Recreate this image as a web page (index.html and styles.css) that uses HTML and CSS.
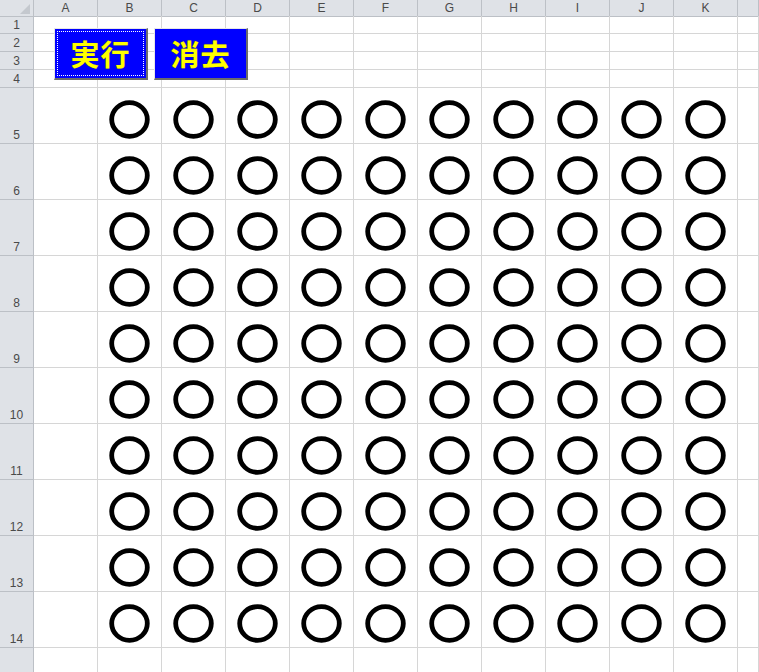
FILE: index.html
```html
<!DOCTYPE html>
<html lang="ja">
<head>
<meta charset="utf-8">
<title>Sheet</title>
<link rel="stylesheet" href="styles.css">
</head>
<body>
<svg class="defs" width="0" height="0" aria-hidden="true">
  <symbol id="o" viewBox="0 0 41 39">
    <ellipse cx="20.5" cy="19.5" rx="17.8" ry="16.8" fill="none" stroke="#000" stroke-width="4.8"/>
  </symbol>
</svg>
<div class="sheet">
  <div class="row head">
    <div class="corner"><span class="tri"></span></div>
    <div class="ch">A</div><div class="ch">B</div><div class="ch">C</div><div class="ch">D</div><div class="ch">E</div><div class="ch">F</div><div class="ch">G</div><div class="ch">H</div><div class="ch">I</div><div class="ch">J</div><div class="ch">K</div><div class="ch"></div>
  </div>
  <div class="row"><div class="rh">1</div><div class="c"></div><div class="c"></div><div class="c"></div><div class="c"></div><div class="c"></div><div class="c"></div><div class="c"></div><div class="c"></div><div class="c"></div><div class="c"></div><div class="c"></div><div class="c"></div></div>
  <div class="row"><div class="rh">2</div><div class="c"></div><div class="c"></div><div class="c"></div><div class="c"></div><div class="c"></div><div class="c"></div><div class="c"></div><div class="c"></div><div class="c"></div><div class="c"></div><div class="c"></div><div class="c"></div></div>
  <div class="row"><div class="rh">3</div><div class="c"></div><div class="c"></div><div class="c"></div><div class="c"></div><div class="c"></div><div class="c"></div><div class="c"></div><div class="c"></div><div class="c"></div><div class="c"></div><div class="c"></div><div class="c"></div></div>
  <div class="row"><div class="rh">4</div><div class="c"></div><div class="c"></div><div class="c"></div><div class="c"></div><div class="c"></div><div class="c"></div><div class="c"></div><div class="c"></div><div class="c"></div><div class="c"></div><div class="c"></div><div class="c"></div></div>

  <div class="row big"><div class="rh">5</div><div class="c"></div><div class="c"><svg class="o"><use href="#o"/></svg></div><div class="c"><svg class="o"><use href="#o"/></svg></div><div class="c"><svg class="o"><use href="#o"/></svg></div><div class="c"><svg class="o"><use href="#o"/></svg></div><div class="c"><svg class="o"><use href="#o"/></svg></div><div class="c"><svg class="o"><use href="#o"/></svg></div><div class="c"><svg class="o"><use href="#o"/></svg></div><div class="c"><svg class="o"><use href="#o"/></svg></div><div class="c"><svg class="o"><use href="#o"/></svg></div><div class="c"><svg class="o"><use href="#o"/></svg></div><div class="c"></div></div>
  <div class="row big"><div class="rh">6</div><div class="c"></div><div class="c"><svg class="o"><use href="#o"/></svg></div><div class="c"><svg class="o"><use href="#o"/></svg></div><div class="c"><svg class="o"><use href="#o"/></svg></div><div class="c"><svg class="o"><use href="#o"/></svg></div><div class="c"><svg class="o"><use href="#o"/></svg></div><div class="c"><svg class="o"><use href="#o"/></svg></div><div class="c"><svg class="o"><use href="#o"/></svg></div><div class="c"><svg class="o"><use href="#o"/></svg></div><div class="c"><svg class="o"><use href="#o"/></svg></div><div class="c"><svg class="o"><use href="#o"/></svg></div><div class="c"></div></div>
  <div class="row big"><div class="rh">7</div><div class="c"></div><div class="c"><svg class="o"><use href="#o"/></svg></div><div class="c"><svg class="o"><use href="#o"/></svg></div><div class="c"><svg class="o"><use href="#o"/></svg></div><div class="c"><svg class="o"><use href="#o"/></svg></div><div class="c"><svg class="o"><use href="#o"/></svg></div><div class="c"><svg class="o"><use href="#o"/></svg></div><div class="c"><svg class="o"><use href="#o"/></svg></div><div class="c"><svg class="o"><use href="#o"/></svg></div><div class="c"><svg class="o"><use href="#o"/></svg></div><div class="c"><svg class="o"><use href="#o"/></svg></div><div class="c"></div></div>
  <div class="row big"><div class="rh">8</div><div class="c"></div><div class="c"><svg class="o"><use href="#o"/></svg></div><div class="c"><svg class="o"><use href="#o"/></svg></div><div class="c"><svg class="o"><use href="#o"/></svg></div><div class="c"><svg class="o"><use href="#o"/></svg></div><div class="c"><svg class="o"><use href="#o"/></svg></div><div class="c"><svg class="o"><use href="#o"/></svg></div><div class="c"><svg class="o"><use href="#o"/></svg></div><div class="c"><svg class="o"><use href="#o"/></svg></div><div class="c"><svg class="o"><use href="#o"/></svg></div><div class="c"><svg class="o"><use href="#o"/></svg></div><div class="c"></div></div>
  <div class="row big"><div class="rh">9</div><div class="c"></div><div class="c"><svg class="o"><use href="#o"/></svg></div><div class="c"><svg class="o"><use href="#o"/></svg></div><div class="c"><svg class="o"><use href="#o"/></svg></div><div class="c"><svg class="o"><use href="#o"/></svg></div><div class="c"><svg class="o"><use href="#o"/></svg></div><div class="c"><svg class="o"><use href="#o"/></svg></div><div class="c"><svg class="o"><use href="#o"/></svg></div><div class="c"><svg class="o"><use href="#o"/></svg></div><div class="c"><svg class="o"><use href="#o"/></svg></div><div class="c"><svg class="o"><use href="#o"/></svg></div><div class="c"></div></div>
  <div class="row big"><div class="rh">10</div><div class="c"></div><div class="c"><svg class="o"><use href="#o"/></svg></div><div class="c"><svg class="o"><use href="#o"/></svg></div><div class="c"><svg class="o"><use href="#o"/></svg></div><div class="c"><svg class="o"><use href="#o"/></svg></div><div class="c"><svg class="o"><use href="#o"/></svg></div><div class="c"><svg class="o"><use href="#o"/></svg></div><div class="c"><svg class="o"><use href="#o"/></svg></div><div class="c"><svg class="o"><use href="#o"/></svg></div><div class="c"><svg class="o"><use href="#o"/></svg></div><div class="c"><svg class="o"><use href="#o"/></svg></div><div class="c"></div></div>
  <div class="row big"><div class="rh">11</div><div class="c"></div><div class="c"><svg class="o"><use href="#o"/></svg></div><div class="c"><svg class="o"><use href="#o"/></svg></div><div class="c"><svg class="o"><use href="#o"/></svg></div><div class="c"><svg class="o"><use href="#o"/></svg></div><div class="c"><svg class="o"><use href="#o"/></svg></div><div class="c"><svg class="o"><use href="#o"/></svg></div><div class="c"><svg class="o"><use href="#o"/></svg></div><div class="c"><svg class="o"><use href="#o"/></svg></div><div class="c"><svg class="o"><use href="#o"/></svg></div><div class="c"><svg class="o"><use href="#o"/></svg></div><div class="c"></div></div>
  <div class="row big"><div class="rh">12</div><div class="c"></div><div class="c"><svg class="o"><use href="#o"/></svg></div><div class="c"><svg class="o"><use href="#o"/></svg></div><div class="c"><svg class="o"><use href="#o"/></svg></div><div class="c"><svg class="o"><use href="#o"/></svg></div><div class="c"><svg class="o"><use href="#o"/></svg></div><div class="c"><svg class="o"><use href="#o"/></svg></div><div class="c"><svg class="o"><use href="#o"/></svg></div><div class="c"><svg class="o"><use href="#o"/></svg></div><div class="c"><svg class="o"><use href="#o"/></svg></div><div class="c"><svg class="o"><use href="#o"/></svg></div><div class="c"></div></div>
  <div class="row big"><div class="rh">13</div><div class="c"></div><div class="c"><svg class="o"><use href="#o"/></svg></div><div class="c"><svg class="o"><use href="#o"/></svg></div><div class="c"><svg class="o"><use href="#o"/></svg></div><div class="c"><svg class="o"><use href="#o"/></svg></div><div class="c"><svg class="o"><use href="#o"/></svg></div><div class="c"><svg class="o"><use href="#o"/></svg></div><div class="c"><svg class="o"><use href="#o"/></svg></div><div class="c"><svg class="o"><use href="#o"/></svg></div><div class="c"><svg class="o"><use href="#o"/></svg></div><div class="c"><svg class="o"><use href="#o"/></svg></div><div class="c"></div></div>
  <div class="row big"><div class="rh">14</div><div class="c"></div><div class="c"><svg class="o"><use href="#o"/></svg></div><div class="c"><svg class="o"><use href="#o"/></svg></div><div class="c"><svg class="o"><use href="#o"/></svg></div><div class="c"><svg class="o"><use href="#o"/></svg></div><div class="c"><svg class="o"><use href="#o"/></svg></div><div class="c"><svg class="o"><use href="#o"/></svg></div><div class="c"><svg class="o"><use href="#o"/></svg></div><div class="c"><svg class="o"><use href="#o"/></svg></div><div class="c"><svg class="o"><use href="#o"/></svg></div><div class="c"><svg class="o"><use href="#o"/></svg></div><div class="c"></div></div>
  <div class="row tail"><div class="rh"></div><div class="c"></div><div class="c"></div><div class="c"></div><div class="c"></div><div class="c"></div><div class="c"></div><div class="c"></div><div class="c"></div><div class="c"></div><div class="c"></div><div class="c"></div><div class="c"></div></div>

  <button class="btn btn-run" type="button"><span class="focus">実行</span></button>
  <button class="btn btn-clear" type="button"><span class="label">消去</span></button>
</div>
</body>
</html>
```

FILE: styles.css
```css
html, body {
  margin: 0;
  padding: 0;
  background: #ffffff;
  overflow: hidden;
}

.defs {
  position: absolute;
  width: 0;
  height: 0;
}

.sheet {
  position: relative;
  width: 759px;
  height: 672px;
  overflow: hidden;
  font-family: "Liberation Sans", "DejaVu Sans", sans-serif;
}

.row {
  display: grid;
  grid-template-columns: 34px repeat(11, 64px) 1fr;
  height: 18px;
}

.row.head {
  height: 16px;
}

.row.big {
  height: 56px;
}

.row.tail {
  height: 40px;
}

.c {
  box-sizing: border-box;
  border-right: 1px solid #d6d6d6;
  border-bottom: 1px solid #d6d6d6;
  display: flex;
  align-items: flex-end;
  justify-content: center;
}

.corner,
.ch,
.rh {
  box-sizing: border-box;
  background: #dfe2e7;
  border-right: 1px solid #bcc0c6;
  border-bottom: 1px solid #bcc0c6;
  color: #4a4a4a;
  font-size: 12px;
}

.corner {
  position: relative;
}

.tri {
  position: absolute;
  right: 3px;
  bottom: 2px;
  width: 0;
  height: 0;
  border-left: 10px solid transparent;
  border-bottom: 10px solid #c4c8ce;
}

.ch {
  display: flex;
  align-items: center;
  justify-content: center;
  line-height: 15px;
  padding-top: 1px;
}

.rh {
  display: flex;
  align-items: flex-end;
  justify-content: center;
  line-height: 14px;
  padding-bottom: 1px;
}

.o {
  width: 41px;
  height: 39px;
  margin-bottom: 4px;
}

.btn {
  position: absolute;
  top: 28px;
  width: 94px;
  height: 52px;
  box-sizing: border-box;
  margin: 0;
  padding: 0;
  background: #0000ff;
  border-style: solid;
  border-width: 1px 2px 2px 1px;
  border-color: #e6e6e6 #6b6b6b #6b6b6b #e6e6e6;
  color: #ffff00;
  font-family: "Noto Sans CJK JP", "Noto Sans CJK SC", sans-serif;
  font-weight: 700;
  font-size: 29px;
  line-height: 1;
  display: flex;
  align-items: stretch;
  justify-content: stretch;
}

.btn-run {
  left: 54px;
}

.btn-clear {
  left: 154px;
}

.focus,
.label {
  flex: 1;
  display: flex;
  align-items: center;
  justify-content: center;
  letter-spacing: 1px;
  text-shadow: 0 0 1px #5a5a00;
}

.focus {
  margin: 2px;
  border: 1px dotted #ffffff;
}

.label {
  margin: 3px;
}
```
